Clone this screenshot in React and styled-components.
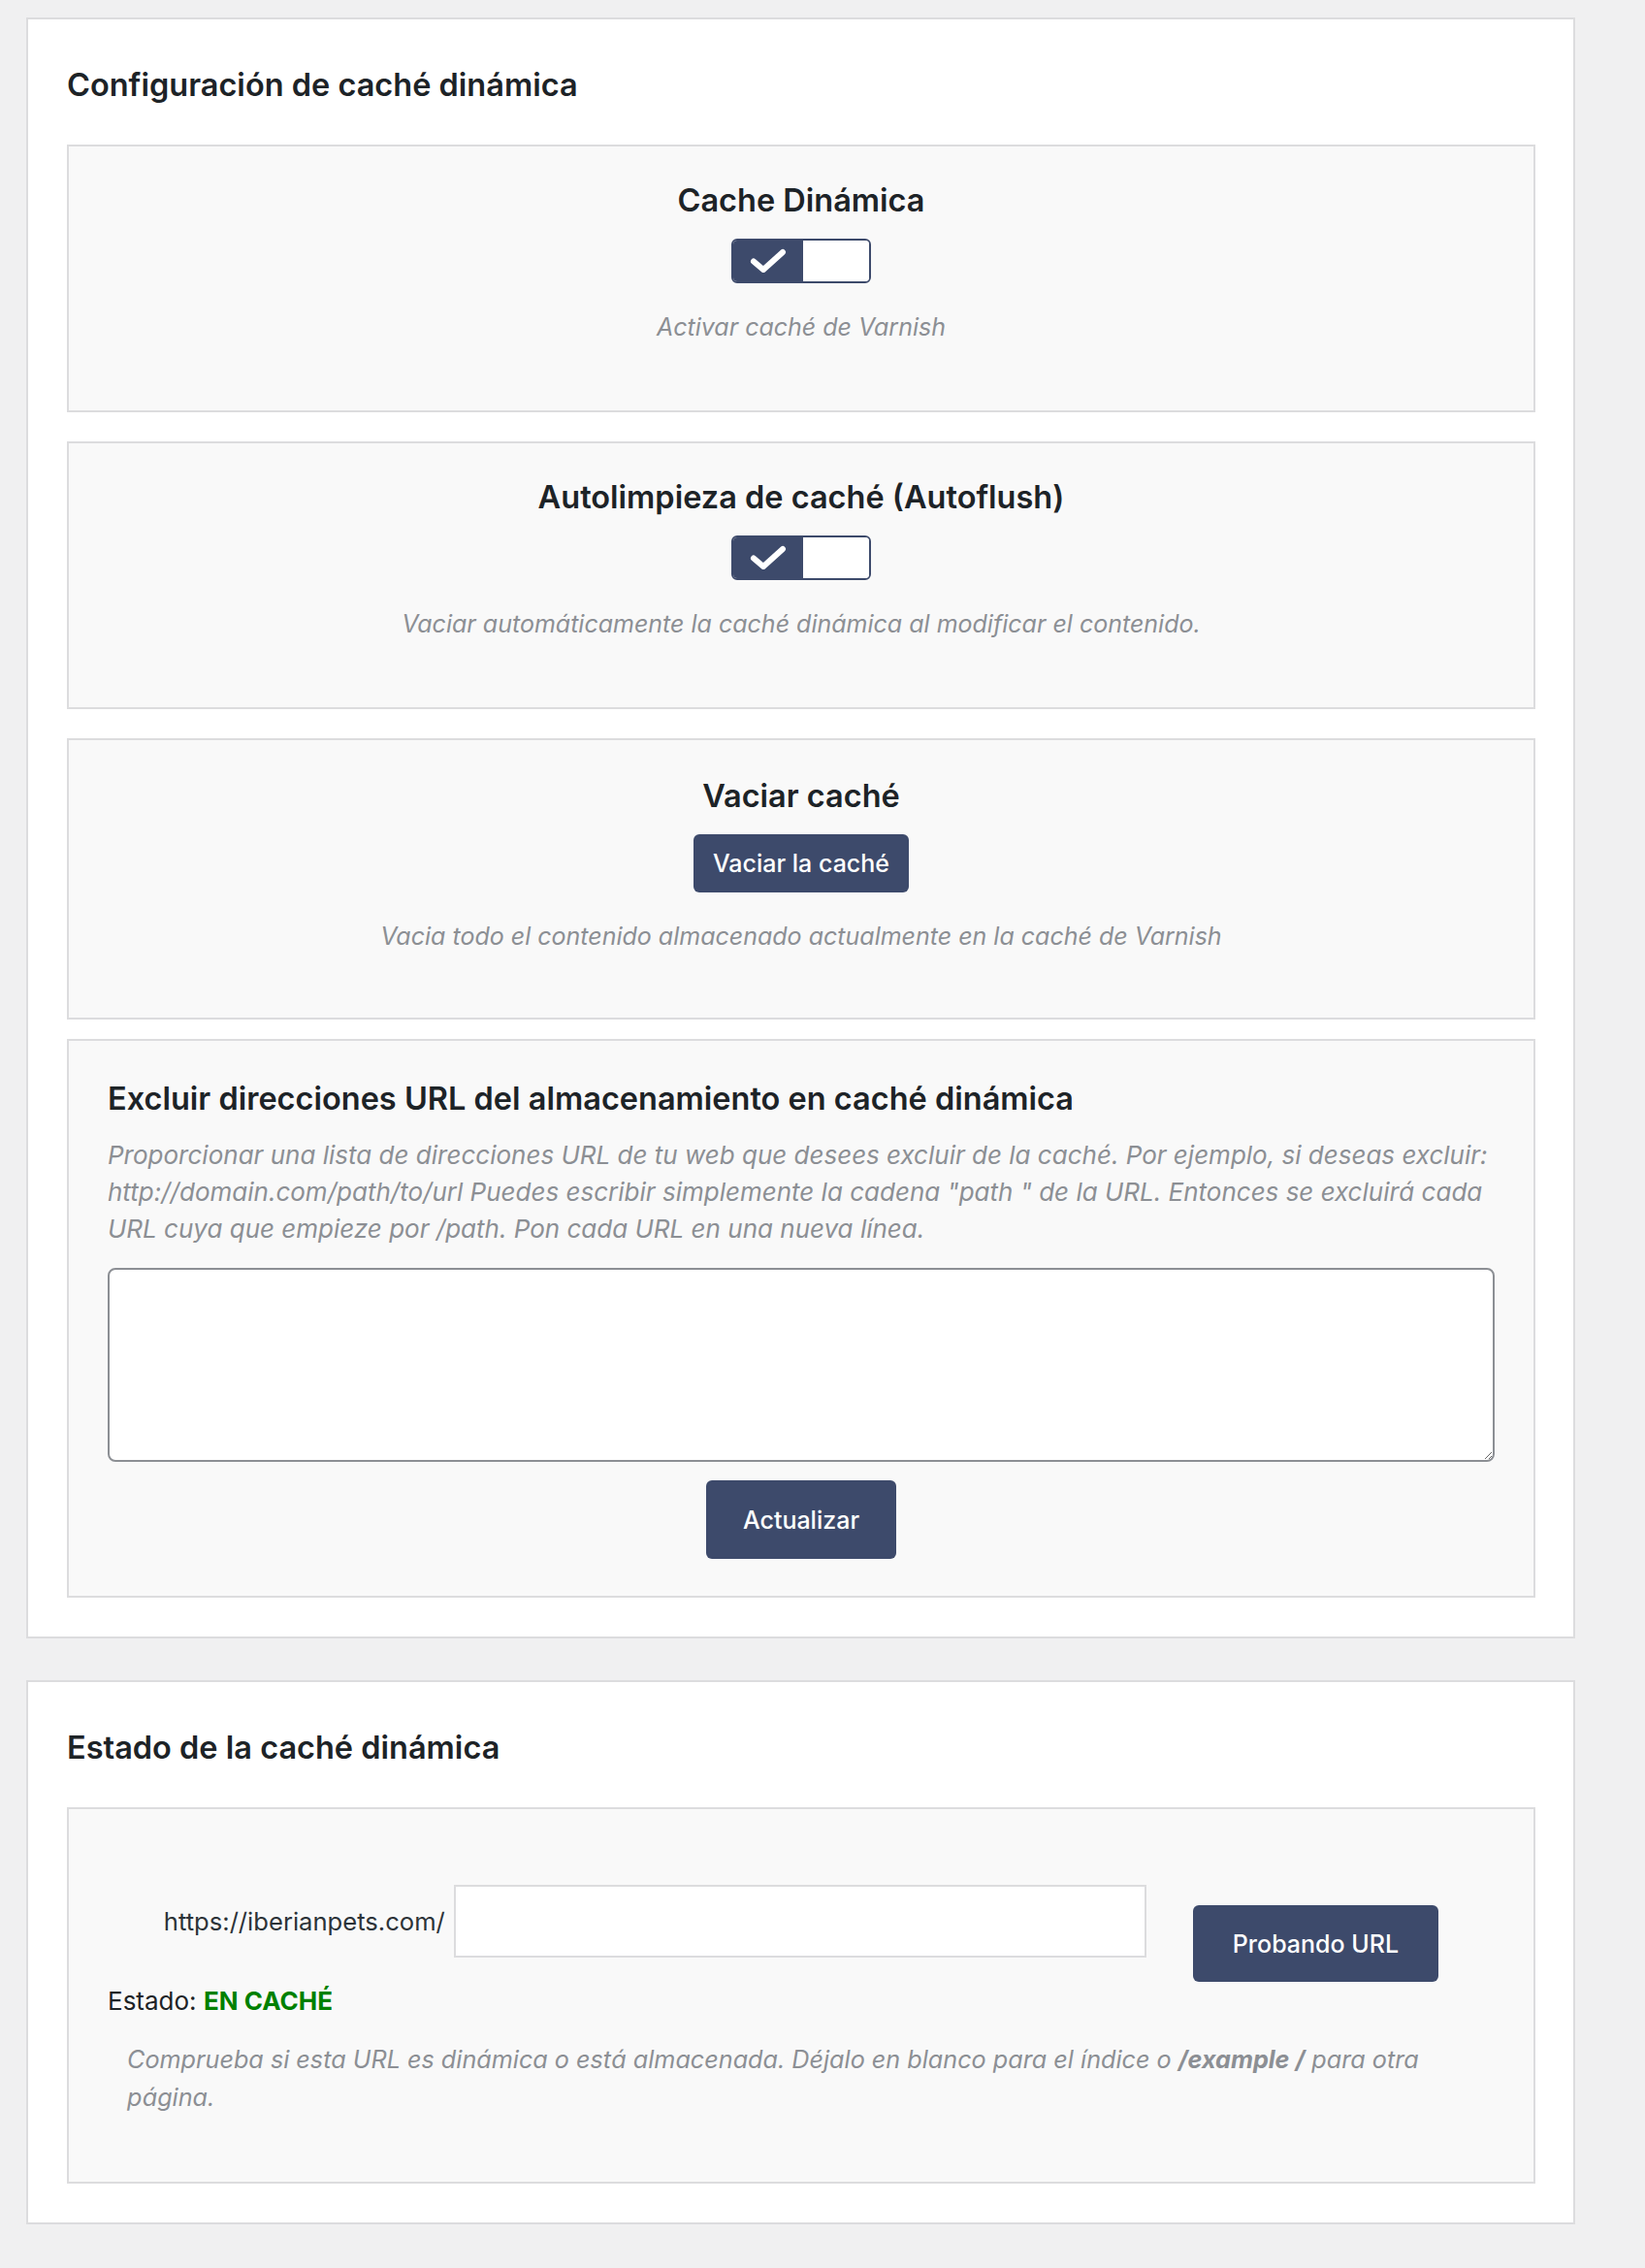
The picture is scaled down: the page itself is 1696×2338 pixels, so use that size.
import React from "react";
import styled, { createGlobalStyle } from "styled-components";

const GlobalStyle = createGlobalStyle`
  html, body {
    margin: 0;
    padding: 0;
    background: #f0f0f1;
  }
  body {
    font-family: Inter, "Liberation Sans", sans-serif;
    color: #1d2327;
  }
  * {
    box-sizing: border-box;
  }
`;

function CheckIcon() {
  return (
    <svg width="38" height="26" viewBox="0 0 38 26" fill="none">
      <path
        d="M4 13.5 L14 22 L34 4"
        stroke="#fff"
        strokeWidth="6"
        strokeLinecap="round"
        strokeLinejoin="round"
      />
    </svg>
  );
}

function Toggle() {
  return (
    <ToggleBox>
      <ToggleOn>
        <CheckIcon />
      </ToggleOn>
      <ToggleOff />
    </ToggleBox>
  );
}

function SettingBox({ title, children, note, tight }) {
  return (
    <Box $tight={tight}>
      <BoxTitle>{title}</BoxTitle>
      {children}
      <Note>{note}</Note>
    </Box>
  );
}

export default function App() {
  return (
    <Page>
      <GlobalStyle />
      <Card>
        <CardTitle>Configuración de caché dinámica</CardTitle>
        <Stack>
          <SettingBox title="Cache Dinámica" note="Activar caché de Varnish">
            <Toggle />
          </SettingBox>
          <SettingBox
            title="Autolimpieza de caché (Autoflush)"
            note="Vaciar automáticamente la caché dinámica al modificar el contenido."
          >
            <Toggle />
          </SettingBox>
          <SettingBox
            tight
            title="Vaciar caché"
            note="Vacia todo el contenido almacenado actualmente en la caché de Varnish"
          >
            <SmallButton>Vaciar la caché</SmallButton>
          </SettingBox>
        </Stack>
        <ExcludeBox>
          <LeftTitle>
            Excluir direcciones URL del almacenamiento en caché dinámica
          </LeftTitle>
          <Help>
            Proporcionar una lista de direcciones URL de tu web que desees
            excluir de la caché. Por ejemplo, si deseas excluir:
            http://domain.com/path/to/url Puedes escribir simplemente la cadena
            "path " de la URL. Entonces se excluirá cada URL cuya que empieze
            por /path. Pon cada URL en una nueva línea.
          </Help>
          <TextArea />
          <Center>
            <BigButton>Actualizar</BigButton>
          </Center>
        </ExcludeBox>
      </Card>

      <Card>
        <CardTitle>Estado de la caché dinámica</CardTitle>
        <StatusBox>
          <UrlRow>
            <UrlLabel>https://iberianpets.com/</UrlLabel>
            <UrlInput type="text" />
            <TestButton>Probando URL</TestButton>
          </UrlRow>
          <StatusLine>
            Estado: <Cached>EN CACHÉ</Cached>
          </StatusLine>
          <StatusHelp>
            Comprueba si esta URL es dinámica o está almacenada. Déjalo en
            blanco para el índice o <Strong>/example /</Strong> para otra
            página.
          </StatusHelp>
        </StatusBox>
      </Card>
    </Page>
  );
}

const Page = styled.div`
  padding: 18px 72px 48px 27px;
  display: flex;
  flex-direction: column;
  gap: 43px;
  width: 1696px;
`;

const Card = styled.section`
  width: 1597px;
  background: #fff;
  border: 2px solid #dcdcde;
  padding: 47px 39px 40px 40px;
`;

const CardTitle = styled.h2`
  margin: 0 0 40px;
  font-size: 32.5px;
  line-height: 42px;
  font-weight: 600;
  color: #1d2327;
`;

const Stack = styled.div`
  display: flex;
  flex-direction: column;
  gap: 30px;
  margin-bottom: 20px;
`;

const Box = styled.div`
  background: #f9f9f9;
  border: 2px solid #dcdcde;
  padding: ${(p) => (p.$tight ? "36px 40px 64px" : "34px 40px 66px")};
  display: flex;
  flex-direction: column;
  align-items: center;
`;

const BoxTitle = styled.h3`
  margin: 0 0 17px;
  font-size: 32.5px;
  line-height: 44px;
  font-weight: 600;
  color: #1d2327;
  text-align: center;
`;

const LeftTitle = styled(BoxTitle)`
  text-align: left;
  margin-bottom: 17px;
`;

const Note = styled.p`
  margin: 26px 0 0;
  font-size: 25px;
  line-height: 39px;
  font-style: italic;
  color: #8c8f94;
  text-align: center;
`;

const ToggleBox = styled.div`
  display: flex;
  width: 144px;
  height: 46px;
  border: 2px solid #3d4a6b;
  border-radius: 6px;
  overflow: hidden;
`;

const ToggleOn = styled.span`
  flex: 0 0 72px;
  background: #3d4a6b;
  display: flex;
  align-items: center;
  justify-content: center;
`;

const ToggleOff = styled.span`
  flex: 1;
  background: #fff;
`;

const Button = styled.button`
  background: #3d4a6b;
  color: #fff;
  border: none;
  border-radius: 6px;
  font-family: Inter, "Liberation Sans", sans-serif;
  font-size: 25px;
  font-weight: 500;
  cursor: pointer;
`;

const SmallButton = styled(Button)`
  height: 60px;
  padding: 0 20px;
`;

const BigButton = styled(Button)`
  height: 81px;
  padding: 0 38px;
`;

const TestButton = styled(Button)`
  height: 79px;
  padding: 0 41px;
  margin-top: 21px;
`;

const ExcludeBox = styled.div`
  background: #f9f9f9;
  border: 2px solid #dcdcde;
  padding: 38px 40px 38px;
`;

const Help = styled.p`
  margin: 0 0 21px;
  font-size: 26px;
  line-height: 38px;
  font-style: italic;
  color: #8c8f94;
`;

const TextArea = styled.textarea`
  display: block;
  width: 100%;
  height: 200px;
  border: 2px solid #8c8f94;
  border-radius: 8px;
  background: #fff;
  resize: vertical;
  margin-bottom: 19px;
`;

const Center = styled.div`
  display: flex;
  justify-content: center;
`;

const StatusBox = styled.div`
  background: #f9f9f9;
  border: 2px solid #dcdcde;
  padding: 78px 40px 67px;
`;

const UrlRow = styled.div`
  display: flex;
  justify-content: center;
  align-items: flex-start;
`;

const UrlLabel = styled.span`
  font-size: 25.6px;
  line-height: 75px;
  color: #2c3338;
  margin-right: 9px;
`;

const UrlInput = styled.input`
  width: 714px;
  height: 75px;
  border: 2px solid #dcdcde;
  background: #fff;
  margin-right: 48px;
`;

const StatusLine = styled.p`
  margin: 0;
  font-size: 26px;
  line-height: 39px;
  color: #1d2327;
`;

const Cached = styled.span`
  color: #008000;
  font-weight: 700;
`;

const StatusHelp = styled.p`
  margin: 22px 0 0 20px;
  max-width: 1400px;
  font-size: 25.2px;
  line-height: 39px;
  font-style: italic;
  color: #8c8f94;
`;

const Strong = styled.strong`
  font-weight: 700;
`;
